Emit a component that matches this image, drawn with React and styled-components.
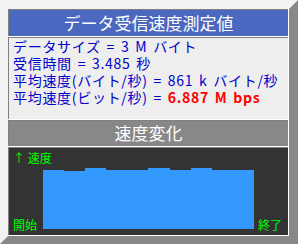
import React from "react";
import styled, { createGlobalStyle } from "styled-components";

const GlobalStyle = createGlobalStyle`
  html, body {
    margin: 0;
    padding: 0;
    background: #f2f2f2;
  }
  * {
    box-sizing: border-box;
  }
`;

const Frame = styled.div`
  width: 298px;
  height: 244px;
  border-style: solid;
  border-width: 9px 9px 8px 8px;
  border-color: #f2f2f2 #888888 #888888 #f2f2f2;
  font-family: "Noto Sans CJK JP", "Noto Sans", sans-serif;
`;

const Panel = styled.div`
  height: 100%;
  background: #ffffff;
  padding: 0 1px 1px 0;
  display: flex;
  flex-direction: column;
  gap: 1px;
`;

const Section = styled.div`
  border-left: 1px solid #808080;
  border-top: 1px solid #808080;
`;

const Title = styled(Section)`
  height: 27px;
  background: #4a68bf;
  color: #ffffff;
  font-size: 17px;
  line-height: 25px;
  text-align: center;
`;

const Info = styled(Section)`
  height: 82px;
  background: #eeeeee;
  padding: 0 0 0 4px;
  color: #0000c8;
  font-size: 14px;
  line-height: 17px;
  letter-spacing: 0.7px;
  word-spacing: 2px;
`;

const Line = styled.div`
  height: 17px;
  white-space: nowrap;
`;

const Highlight = styled.span`
  color: #ff0000;
  font-weight: bold;
`;

const Heading = styled(Section)`
  height: 26px;
  background: #888888;
  color: #ffffff;
  font-size: 17px;
  line-height: 24px;
  text-align: center;
`;

const Chart = styled(Section)`
  flex: 1;
  background: #333333;
  color: #00ff00;
  font-size: 12px;
  line-height: 14px;
  display: grid;
  grid-template-columns: 30px 211px 1fr;
  grid-template-rows: auto 1fr;
  padding: 3px 0 6px 4px;
`;

const AxisLabel = styled.div`
  grid-column: 1 / -1;
`;

const EdgeLabel = styled.div`
  align-self: end;
  padding-left: ${(p) => (p.$right ? "4px" : "0")};
  margin-bottom: -3px;
`;

const Bars = styled.div`
  display: flex;
  align-items: flex-end;
`;

const Bar = styled.div`
  flex: 1;
  background: #3399ff;
`;

const speeds = [59, 58, 61, 59, 59, 61, 59, 61, 59, 59];

export default function App() {
  return (
    <>
      <GlobalStyle />
      <Frame>
        <Panel>
          <Title>データ受信速度測定値</Title>
          <Info>
            <Line>データサイズ = 3 M バイト</Line>
            <Line>受信時間 = 3.485 秒</Line>
            <Line>平均速度(バイト/秒) = 861 k バイト/秒</Line>
            <Line>
              平均速度(ビット/秒) = <Highlight>6.887 M bps</Highlight>
            </Line>
          </Info>
          <Heading>速度変化</Heading>
          <Chart>
            <AxisLabel>↑ 速度</AxisLabel>
            <EdgeLabel>開始</EdgeLabel>
            <Bars>
              {speeds.map((h, i) => (
                <Bar key={i} style={{ height: h }} />
              ))}
            </Bars>
            <EdgeLabel $right>終了</EdgeLabel>
          </Chart>
        </Panel>
      </Frame>
    </>
  );
}
